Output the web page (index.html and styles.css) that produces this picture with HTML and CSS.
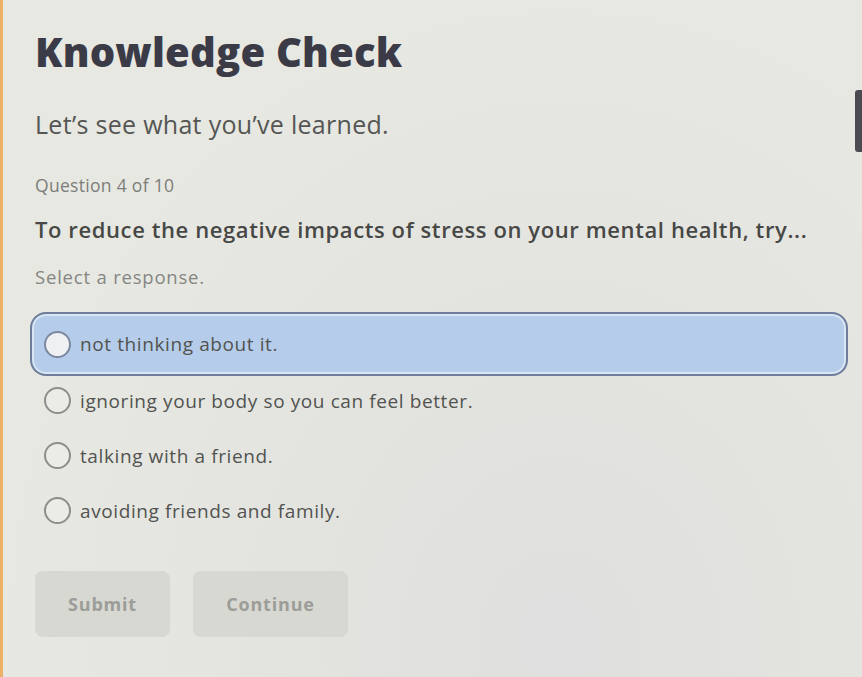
FILE: index.html
```html
<!DOCTYPE html>
<html>
<head>
    <title>Knowledge Check</title>
    <link rel="stylesheet" href="styles.css">
</head>
<body>
    <div class="panel">
        <h1 class="title">Knowledge Check</h1>
        <p class="intro">Let’s see what you’ve learned.</p>
        <p class="counter">Question 4 of 10</p>
        <p class="question">To reduce the negative impacts of stress on your mental health, try...</p>
        <p class="hint">Select a response.</p>

        <div class="options">
            <label class="option selected">
                <span class="radio"></span>
                <span class="option-text">not thinking about it.</span>
            </label>
            <label class="option">
                <span class="radio"></span>
                <span class="option-text">ignoring your body so you can feel better.</span>
            </label>
            <label class="option">
                <span class="radio"></span>
                <span class="option-text">talking with a friend.</span>
            </label>
            <label class="option">
                <span class="radio"></span>
                <span class="option-text">avoiding friends and family.</span>
            </label>
        </div>

        <div class="actions">
            <button class="btn btn-submit" disabled>Submit</button>
            <button class="btn btn-continue" disabled>Continue</button>
        </div>
    </div>
    <div class="scroll-thumb"></div>
</body>
</html>
```

FILE: styles.css
```css
html, body {
  margin: 0;
  height: 100%;
}

body {
  font-family: "Open Sans", Arial, sans-serif;
  background: radial-gradient(ellipse at 65% 95%, #dfdfdf 0%, #e3e4df 35%, #e7e8e2 70%);
  overflow: hidden;
}

.panel {
  min-height: 100%;
  box-sizing: border-box;
  border-left: 3px solid #eeb066;
  padding: 26px 14px 0 32px;
}

.title {
  margin: 0;
  font-size: 40px;
  font-weight: 800;
  color: #3b3b48;
  letter-spacing: 0.2px;
  line-height: 52px;
}

.intro {
  margin: 30px 0 0;
  font-size: 25px;
  letter-spacing: 0.3px;
  color: #555654;
  line-height: 32px;
}

.counter {
  margin: 33px 0 0;
  font-size: 17.5px;
  letter-spacing: 0.3px;
  color: #7c7d79;
  line-height: 24px;
}

.question {
  margin: 18px 0 0;
  font-size: 22px;
  font-weight: 600;
  letter-spacing: 0.6px;
  color: #474846;
  line-height: 28px;
}

.hint {
  margin: 22px 0 0;
  font-size: 18.5px;
  letter-spacing: 0.8px;
  color: #858682;
  line-height: 24px;
}

.options {
  margin-top: 23px;
  display: flex;
  flex-direction: column;
}

.option {
  display: flex;
  align-items: center;
  gap: 9px;
  height: 55px;
  padding: 0 14px 0 12px;
  margin-left: -5px;
  border: 2px solid transparent;
  border-radius: 16px;
  box-sizing: border-box;
}

.option.selected {
  height: 64px;
  margin-bottom: -3px;
  background: #b5cdea;
  border-color: #6e7d9c;
  box-shadow: inset 0 0 0 2px #d8e5f3;
}

.radio {
  width: 23px;
  height: 23px;
  border: 2px solid #8d8e8b;
  border-radius: 50%;
  background: #ebece7;
  flex-shrink: 0;
}

.selected .radio {
  border-color: #7c87a0;
  background: #eef0f2;
}

.option-text {
  font-size: 19px;
  font-weight: 500;
  letter-spacing: 0.6px;
  color: #525350;
}

.actions {
  margin-top: 33px;
  display: flex;
  gap: 23px;
}

.btn {
  font-family: "Open Sans", Arial, sans-serif;
  font-size: 18px;
  font-weight: 700;
  letter-spacing: 0.8px;
  color: #9c9d98;
  background: #d7d8d2;
  border: none;
  border-radius: 8px;
  height: 66px;
  padding: 0;
}

.btn-submit {
  width: 135px;
}

.btn-continue {
  width: 155px;
}

.scroll-thumb {
  position: fixed;
  right: 0;
  top: 90px;
  width: 7px;
  height: 62px;
  background: #4b4b52;
  border-radius: 3px 0 0 3px;
}
```
